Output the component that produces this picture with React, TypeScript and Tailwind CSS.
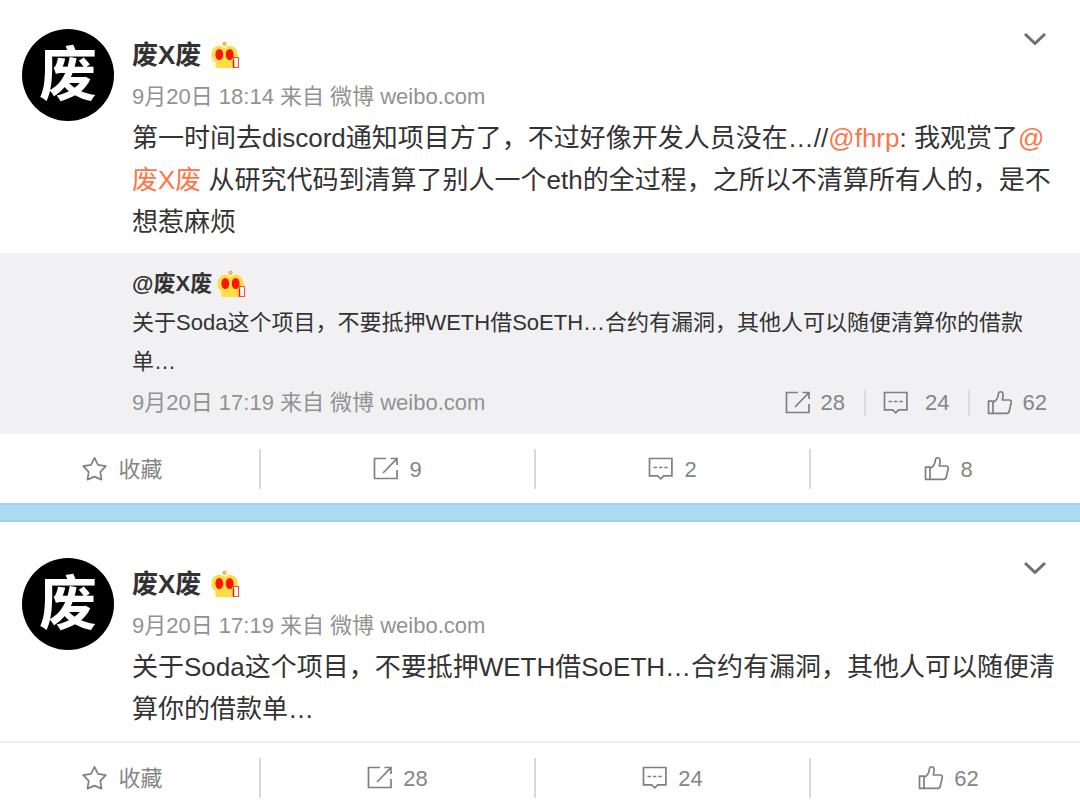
import type { ReactNode } from "react";

function Crown() {
  return (
    <svg viewBox="0 0 29 28" className="h-[28px] w-[29px] shrink-0" aria-hidden="true">
      <path
        d="M4.500 27V21.500C.5 19 -.3 15 .6 11.500C1.800 6.500 6.500 3.500 10.500 5.200C11.500 5.600 12.500 6.200 13.500 7C14.500 6.200 15.500 5.600 16.500 5.200C20.500 3.500 25.200 6.500 26.400 11.500C27.300 15 26.500 19 24 21.500V27Z"
        fill="#ffdd45"
      />
      <circle cx="13.500" cy="2.800" r="2.100" fill="#f9a13a" />
      <circle cx="13.500" cy="2.800" r="0.800" fill="#ffe27a" />
      <ellipse cx="8.300" cy="13.500" rx="3.900" ry="5.500" fill="#fb1505" />
      <ellipse cx="18.700" cy="13.500" rx="3.900" ry="5.500" fill="#fb1505" />
      <rect x="22.500" y="16.500" width="5" height="10" fill="#fff" stroke="#ff4a30" strokeWidth="1" />
      <path d="M22.500 19V26.500" stroke="#fb1505" strokeWidth="1.500" />
    </svg>
  );
}

function IconFrame({ children }: { children: ReactNode }) {
  return (
    <svg
      viewBox="0 0 26 26"
      className="h-[26px] w-[26px] shrink-0"
      fill="none"
      stroke="#808080"
      strokeWidth="1.7"
      aria-hidden="true"
    >
      {children}
    </svg>
  );
}

function StarIcon() {
  return (
    <IconFrame>
      <path
        d="M12.500 1.800L16 8.800L23.800 10.100L18.300 15.800L19.500 23.600L12.500 20.600L5.500 23.600L6.700 15.800L1.200 10.100L9 8.800Z"
        strokeLinejoin="round"
      />
    </IconFrame>
  );
}

function ShareIcon() {
  return (
    <IconFrame>
      <path d="M13 2.500H1.500V22.500H24V14" />
      <path d="M10 17L23.500 3.200M17.500 2.500H24V9" />
    </IconFrame>
  );
}

function CommentIcon() {
  return (
    <IconFrame>
      <path d="M1.500 2.500H23.900V19.800H15.700L12.700 22.800L9.700 19.800H1.500Z" />
      <path d="M5.500 11.500H9M10.900 11.500H14.400M16.300 11.500H19.800" />
    </IconFrame>
  );
}

function LikeIcon() {
  return (
    <IconFrame>
      <path
        d="M1.500 11.200H6V23.300H1.500ZM6 12.200C9.800 10.700 11 8.200 11.400 4.200C11.600 1 16 .7 16.100 4.700C16.100 6.700 15.700 8.200 15.300 10H22.100C23.800 10 24.500 11.200 24.200 12.700L22.200 21.200C21.900 22.600 21.100 23.300 19.800 23.300H6"
        strokeLinejoin="round"
      />
    </IconFrame>
  );
}

function Avatar() {
  return (
    <div className="flex size-[92px] shrink-0 items-center justify-center rounded-full bg-black text-[58px] leading-none font-bold text-white">
      废
    </div>
  );
}

function Meta({ time }: { time: string }) {
  return (
    <p className="text-[22px] leading-[40px] text-[#929292]">
      9月20日 {time} 来自 微博 weibo.com
    </p>
  );
}

function Action({ icon, label, name }: { icon: ReactNode; label: string; name: string }) {
  return (
    <button
      type="button"
      aria-label={`${name} ${label}`}
      className="flex h-10 items-center justify-center gap-[10px] border-r-2 border-[#d9d9d9] text-[22px] text-[#858585] last:border-r-0"
    >
      {icon}
      <span>{label}</span>
    </button>
  );
}

function ActionBar({ shares, comments, likes }: { shares: string; comments: string; likes: string }) {
  return (
    <footer className="overflow-hidden pt-[15px] pb-[14px]">
      <div className="-mr-[6px] -ml-[14px] grid grid-cols-4">
        <Action icon={<StarIcon />} label="收藏" name="操作" />
        <Action icon={<ShareIcon />} label={shares} name="转发" />
        <Action icon={<CommentIcon />} label={comments} name="评论" />
        <Action icon={<LikeIcon />} label={likes} name="赞" />
      </div>
    </footer>
  );
}

function PostBody({ time, children }: { time: string; children: ReactNode }) {
  return (
    <div className="flex gap-[18px] pr-4 pl-[22px]">
      <Avatar />
      <div className="min-w-0 flex-1">
        <header className="flex items-start justify-between pr-[17px]">
          <h2 className="flex items-center gap-[10px] pt-1 text-[26px] leading-[44px] font-bold text-[#333]">
            废X废 <Crown />
          </h2>
          <button type="button" aria-label="更多">
            <svg viewBox="0 0 24 18" className="h-[18px] w-[24px]" fill="none" stroke="#6e6e6e" strokeWidth="3" aria-hidden="true">
              <path d="M2 5L12 14.500L22 5" />
            </svg>
          </button>
        </header>
        <Meta time={time} />
        <p className="text-[26px] leading-[42px] text-[#333]">{children}</p>
      </div>
    </div>
  );
}

export default function App() {
  return (
    <main className="bg-white font-['Liberation_Sans','Noto_Sans_CJK_SC',sans-serif]" lang="zh-CN">
      <article>
        <div className="pt-[29px] pb-[10px]">
          <PostBody time="18:14">
            第一时间去discord通知项目方了，不过好像开发人员没在…//
            <a href="#fhrp" className="text-[#ff7549]">@fhrp</a>: 我观赏了
            <a href="#author" className="text-[#ff7549]">@废X废</a>{" "}
            从研究代码到清算了别人一个eth的全过程，之所以不清算所有人的，是不想惹麻烦
          </PostBody>
        </div>
        <blockquote className="bg-[#f1f1f4] pt-3 pr-[33px] pb-[11px] pl-[132px] text-[22px] text-[#333]">
          <h3 className="flex items-center gap-[5px] leading-[38px] font-bold">
            @废X废 <Crown />
          </h3>
          <p className="pb-[2px] leading-[39px]">
            关于Soda这个项目，不要抵押WETH借SoETH…合约有漏洞，其他人可以随便清算你的借款单…
          </p>
          <div className="flex items-center justify-between">
            <Meta time="17:19" />
            <div className="flex items-center leading-[28px] text-[#858585]">
              <button type="button" aria-label="转发 28" className="flex items-center gap-[10px] pr-[19px]">
                <ShareIcon />
                <span>28</span>
              </button>
              <button type="button" aria-label="评论 24" className="flex items-center gap-4 border-x-2 border-[#dcdcdf] pr-[18px] pl-[17px] leading-[22px]">
                <CommentIcon />
                <span>24</span>
              </button>
              <button type="button" aria-label="赞 62" className="flex items-center gap-[10px] pl-[17px]">
                <LikeIcon />
                <span>62</span>
              </button>
            </div>
          </div>
        </blockquote>
        <ActionBar shares="9" comments="2" likes="8" />
      </article>
      <div className="h-[19px] border-y-2 border-[#a3cfe9] bg-[#acdaf2]" />
      <article>
        <div className="border-b-2 border-[#efefef] pt-[36px] pb-[11px]">
          <PostBody time="17:19">
            关于Soda这个项目，不要抵押WETH借SoETH…合约有漏洞，其他人可以随便清算你的借款单…
          </PostBody>
        </div>
        <ActionBar shares="28" comments="24" likes="62" />
      </article>
    </main>
  );
}
